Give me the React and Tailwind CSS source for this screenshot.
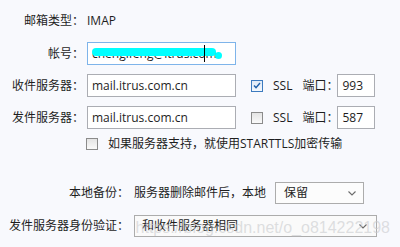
import React from "react";

function Box({ checked }) {
  return checked ? (
    <span className="block w-[12px] h-[12px] border border-[#3d7bbf] bg-gradient-to-b from-[#dfeaf7] to-[#f4f8fd] flex items-center justify-center shrink-0">
      <svg width="8" height="7" viewBox="0 0 8 7">
        <path d="M1 3.6 L3 5.6 L7 1" fill="none" stroke="#1f5fa8" strokeWidth="1.4" />
      </svg>
    </span>
  ) : (
    <span className="block w-[12px] h-[12px] border border-[#8b8b8b] bg-gradient-to-b from-[#e4e4e4] to-[#fafafa] shrink-0" />
  );
}

function Chevron() {
  return (
    <svg width="8" height="5" viewBox="0 0 8 5" className="shrink-0">
      <path d="M0.5 0.5 L4 4 L7.5 0.5" fill="none" stroke="#6b6b6b" strokeWidth="1.1" />
    </svg>
  );
}

function ServerRow({ label, ssl, port }) {
  return (
    <div className="flex items-center h-[23px] mt-[9px] whitespace-nowrap">
      <span className="w-[84px] text-right shrink-0">{label}</span>
      <div className="ml-[3px] w-[149px] h-[23px] border border-[#abadb3] bg-white flex items-center pl-[4px] shrink-0">
        mail.itrus.com.cn
      </div>
      <span className="ml-[15px] shrink-0">
        <Box checked={ssl} />
      </span>
      <span className="ml-[10px] shrink-0">SSL</span>
      <span className="ml-[10px] w-[35px] shrink-0">端口：</span>
      <div className="w-[38px] h-[23px] border border-[#abadb3] bg-white flex items-center pl-[4px] shrink-0">
        {port}
      </div>
    </div>
  );
}

export default function App() {
  return (
    <div className="w-[400px] h-[247px] bg-[#f8f9fd] relative overflow-hidden text-[12px] leading-none text-[#1e1e1e] font-['Open_Sans','Noto_Sans_CJK_SC',sans-serif]">
      <div className="flex flex-col pt-[9px]">
        {/* 邮箱类型 */}
        <div className="flex items-center h-[23px]">
          <span className="w-[84px] text-right">邮箱类型：</span>
          <span className="ml-[3px]">IMAP</span>
        </div>

        {/* 帐号 */}
        <div className="flex items-center h-[23px] mt-[10px]">
          <span className="w-[84px] text-right">帐号：</span>
          <div className="ml-[3px] w-[149px] h-[23px] border border-[#7eb4ea] bg-white flex items-center pl-[4px] relative overflow-hidden">
            <span>chenglfeng@itrus.com</span>
            <span className="absolute left-[4px] top-[5px] w-[124px] h-[8px] rounded-full bg-[#00ffff]" />
            <span className="absolute left-[127px] top-[9px] w-[7px] h-[7px] rounded-full bg-[#00ffff]" />
            <span className="absolute left-[116px] top-[2px] w-px h-[17px] bg-black" />
          </div>
        </div>

        <ServerRow label="收件服务器：" ssl port="993" />
        <ServerRow label="发件服务器：" port="587" />

        {/* STARTTLS */}
        <div className="flex items-center h-[16px] mt-[7px] pl-[86px]">
          <Box />
          <span className="ml-[10px]">如果服务器支持，就使用STARTTLS加密传输</span>
        </div>

        {/* 本地备份 */}
        <div className="flex items-center h-[22px] mt-[30px]">
          <span className="w-[129px] text-right">本地备份：</span>
          <span className="ml-[5px]">服务器删除邮件后，本地</span>
          <div className="ml-[9px] w-[89px] h-[22px] border border-[#acacac] bg-[#fcfcfc] flex items-center justify-between pl-[8px] pr-[7px]">
            <span>保留</span>
            <Chevron />
          </div>
        </div>

        {/* 发件服务器身份验证 */}
        <div className="flex items-center h-[22px] mt-[11px]">
          <span className="w-[129px] text-right">发件服务器身份验证：</span>
          <div className="ml-[5px] w-[243px] h-[22px] border border-[#acacac] bg-[#fafafa] flex items-center justify-between pl-[7px] pr-[9px]">
            <span>和收件服务器相同</span>
            <Chevron />
          </div>
        </div>
      </div>

      {/* watermark */}
      <span className="absolute right-[10px] top-[220px] text-[16px] leading-none text-[#c9cacd]/60 font-['Liberation_Sans',sans-serif]">
        https://blog.csdn.net/o_o814222198
      </span>
    </div>
  );
}
